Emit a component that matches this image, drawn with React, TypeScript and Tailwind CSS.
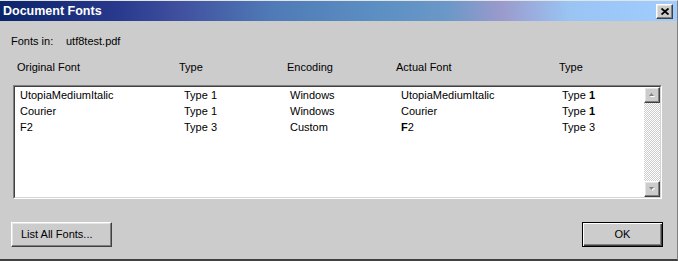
import React from "react";

interface FontRow {
  original: React.ReactNode;
  type: string;
  encoding: string;
  actual: React.ReactNode;
  actualType: React.ReactNode;
}

const rows: FontRow[] = [
  {
    original: "UtopiaMediumItalic",
    type: "Type 1",
    encoding: "Windows",
    actual: "UtopiaMediumItalic",
    actualType: (
      <>
        Type <b>1</b>
      </>
    ),
  },
  {
    original: "Courier",
    type: "Type 1",
    encoding: "Windows",
    actual: "Courier",
    actualType: (
      <>
        Type <b>1</b>
      </>
    ),
  },
  {
    original: "F2",
    type: "Type 3",
    encoding: "Custom",
    actual: (
      <>
        <b>F</b>2
      </>
    ),
    actualType: "Type 3",
  },
];

const bevel =
  "border border-t-white border-l-white border-r-[#404040] border-b-[#404040] shadow-[inset_-1px_-1px_#808080,inset_1px_1px_#e4e4e4]";

function ArrowBtn({ down }: { down?: boolean }) {
  return (
    <div className={`w-[16px] h-[16px] bg-[#cccccc] ${bevel} flex items-center justify-center`}>
      <svg width="9" height="6" viewBox="0 0 9 6">
        {down ? (
          <>
            <path d="M2 2h5l-2.5 3z" fill="#ffffff" />
            <path d="M1 1h5l-2.5 3z" fill="#808080" />
          </>
        ) : (
          <>
            <path d="M2 5h5l-2.5-3z" fill="#ffffff" />
            <path d="M1 4h5l-2.5-3z" fill="#808080" />
          </>
        )}
      </svg>
    </div>
  );
}

export default function App() {
  return (
    <div className="w-[678px] h-[261px] bg-[#cccccc] border-t border-t-[#e4e4e4] border-b-2 border-b-[#404040] border-r border-r-[#808080] flex flex-col font-['Liberation_Sans',Arial,sans-serif] text-[11px] text-black overflow-hidden">
      {/* Title bar */}
      <div className="h-[20px] flex items-center justify-between pl-[3px] pr-[4px] bg-[linear-gradient(90deg,#0a246a_0%,#2a3a8e_18%,#3f4f9e_26%,#4f7ab6_40%,#5b8ec2_55%,#6a98c8_66%,#9a9acb_74%,#99c4f4_84%,#a0ccff_100%)]">
        <span className="text-white font-bold text-[12.5px] leading-none">Document Fonts</span>
        <div className={`w-[17px] h-[15px] bg-[#cccccc] ${bevel} flex items-center justify-center`}>
          <svg width="8" height="7" viewBox="0 0 8 7">
            <path d="M0.5 0.5L7.5 6.5M7.5 0.5L0.5 6.5" stroke="#000" strokeWidth="1.8" />
          </svg>
        </div>
      </div>

      {/* Fonts in */}
      <div className="flex mt-[14px] pl-[11px] leading-[13px]">
        <span className="w-[55px]">Fonts in:</span>
        <span>utf8test.pdf</span>
      </div>

      {/* Column headers */}
      <div className="grid grid-cols-[162px_108px_109px_163px_auto] pl-[17px] mt-[13px] leading-[13px]">
        <span>Original Font</span>
        <span>Type</span>
        <span>Encoding</span>
        <span>Actual Font</span>
        <span>Type</span>
      </div>

      {/* List box */}
      <div className="ml-[13px] mt-[11px] w-[649px] h-[114px] border border-t-[#808080] border-l-[#808080] border-r-white border-b-white">
        <div className="h-full flex bg-white border border-t-[#404040] border-l-[#404040] border-r-[#d4d4d4] border-b-[#d4d4d4]">
          <div className="flex-1 pl-[5px] leading-[16px]">
            {rows.map((r, i) => (
              <div key={i} className="grid grid-cols-[164px_106px_111px_161px_auto]">
                <span>{r.original}</span>
                <span>{r.type}</span>
                <span>{r.encoding}</span>
                <span>{r.actual}</span>
                <span>{r.actualType}</span>
              </div>
            ))}
          </div>
          {/* Scrollbar */}
          <div className="w-[16px] flex flex-col">
            <ArrowBtn />
            <div className="flex-1 bg-[repeating-conic-gradient(#ffffff_0_25%,#cccccc_0_50%)] bg-[length:2px_2px]" />
            <ArrowBtn down />
          </div>
        </div>
      </div>

      {/* Buttons */}
      <div className="flex justify-between pl-[11px] pr-[14px] mt-[23px]">
        <button className={`w-[101px] h-[25px] bg-[#cccccc] ${bevel} text-left pl-[9px] leading-none`}>
          List All Fonts...
        </button>
        <button className="w-[81px] h-[25px] bg-[#cccccc] border border-black shadow-[inset_1px_1px_#ffffff,inset_-1px_-1px_#404040,inset_-2px_-2px_#808080] leading-none">
          OK
        </button>
      </div>
    </div>
  );
}
